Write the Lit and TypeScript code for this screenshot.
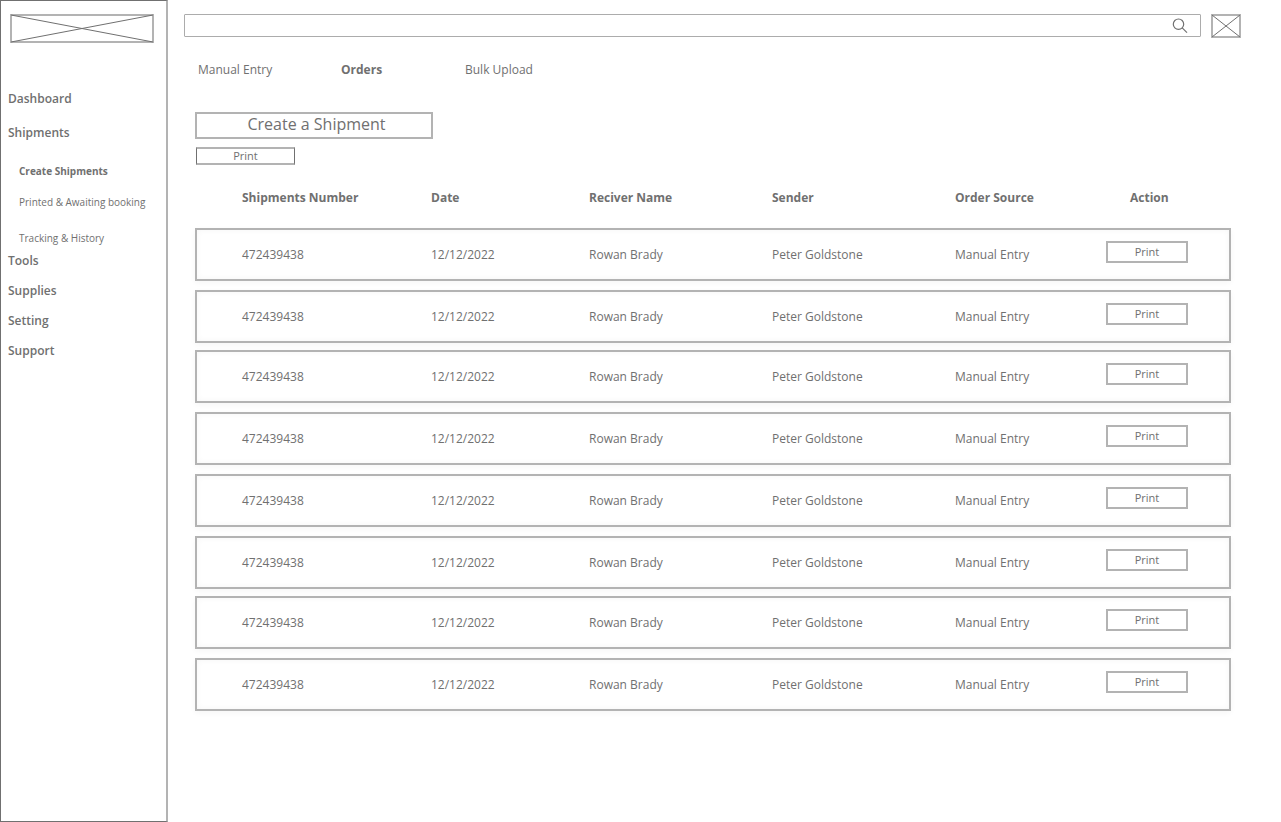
import { LitElement, html, css } from "lit";
import { customElement, property } from "lit/decorators.js";
import { classMap } from "lit/directives/class-map.js";

interface Shipment {
  number: string;
  date: string;
  receiver: string;
  sender: string;
  source: string;
}

const shipments: Shipment[] = Array.from({ length: 8 }, () => ({
  number: "472439438",
  date: "12/12/2022",
  receiver: "Rowan Brady",
  sender: "Peter Goldstone",
  source: "Manual Entry",
}));

@customElement("app-sidebar")
class AppSidebar extends LitElement {
  static styles = css`
    :host {
      box-sizing: border-box;
      display: block;
      padding: 13px 12px 24px 7px;
      border: 1px solid #707070;
      border-right: 2px solid #b3b3b3;
    }
    .logo {
      display: block;
      width: 144px;
      height: 29px;
      margin-left: 2px;
    }
    ul {
      list-style: none;
      margin: 0;
      padding: 0;
    }
    .menu {
      display: flex;
      flex-direction: column;
      gap: 12px;
      margin-top: 47px;
      font-size: 12px;
      font-weight: 600;
      line-height: 18px;
    }
    .section {
      margin-top: 4px;
    }
    .sub {
      display: flex;
      flex-direction: column;
      gap: 15px;
      padding: 21px 0 0 11px;
      margin-bottom: -6px;
      font-size: 10px;
      font-weight: 400;
      line-height: 16px;
      white-space: nowrap;
    }
    .last {
      margin-top: 5px;
    }
    .current {
      font-weight: 700;
    }
    a {
      color: #707070;
      text-decoration: none;
    }
  `;

  render() {
    return html`
      <svg class="logo" viewBox="0 0 144 29" role="img" aria-label="Logo">
        <rect x="1" y="1" width="142" height="27" fill="none" stroke="#b3b3b3" stroke-width="2" />
        <path d="M1 1L143 28M1 28L143 1" fill="none" stroke="#707070" />
      </svg>
      <nav aria-label="Main">
        <ul class="menu">
          <li><a href="#dashboard">Dashboard</a></li>
          <li class="section">
            <a href="#shipments">Shipments</a>
            <ul class="sub">
              <li><a class="current" href="#create">Create Shipments</a></li>
              <li><a href="#printed">Printed &amp; Awaiting booking</a></li>
              <li class="last"><a href="#tracking">Tracking &amp; History</a></li>
            </ul>
          </li>
          <li><a href="#tools">Tools</a></li>
          <li><a href="#supplies">Supplies</a></li>
          <li><a href="#setting">Setting</a></li>
          <li><a href="#support">Support</a></li>
        </ul>
      </nav>
    `;
  }
}

@customElement("shipment-table")
class ShipmentTable extends LitElement {
  @property({ attribute: false }) rows: Shipment[] = [];

  static styles = css`
    :host {
      display: block;
    }
    table,
    thead {
      display: block;
    }
    tbody {
      display: flex;
      flex-direction: column;
      gap: 9px;
      margin-top: 19px;
    }
    tr {
      display: grid;
      grid-template-columns: 189fr 158fr 183fr 183fr 151fr 82px;
      align-items: center;
      box-sizing: border-box;
      padding: 0 41px 0 45px;
      border: 2px solid transparent;
    }
    th,
    td {
      padding: 0;
      text-align: left;
      font-size: 12px;
      line-height: 18px;
    }
    .row {
      height: 53px;
      border-color: #b3b3b3;
      box-shadow: 0 2px 6px rgba(0, 0, 0, 0.04), inset 0 0 6px rgba(0, 0, 0, 0.04);
    }
    .row:nth-child(4n + 3) {
      margin-top: -2px;
    }
    .action-head {
      padding-left: 24px;
    }
    .action {
      align-self: start;
      display: flex;
      padding-top: 11px;
    }
    button {
      width: 82px;
      height: 22px;
      padding: 0;
      border: 2px solid #b3b3b3;
      background: #fff;
      color: #707070;
      font: 11px/16px "Open Sans", sans-serif;
    }
  `;

  render() {
    return html`
      <table>
        <thead>
          <tr>
            <th scope="col">Shipments Number</th>
            <th scope="col">Date</th>
            <th scope="col">Reciver Name</th>
            <th scope="col">Sender</th>
            <th scope="col">Order Source</th>
            <th scope="col" class="action-head">Action</th>
          </tr>
        </thead>
        <tbody>
          ${this.rows.map(
            (r) => html`<tr class="row">
              <td>${r.number}</td>
              <td>${r.date}</td>
              <td>${r.receiver}</td>
              <td>${r.sender}</td>
              <td>${r.source}</td>
              <td class="action"><button type="button">Print</button></td>
            </tr>`
          )}
        </tbody>
      </table>
    `;
  }
}

@customElement("app-root")
class AppRoot extends LitElement {
  static styles = css`
    :host {
      display: grid;
      grid-template-columns: 168px 1fr;
      min-height: 100vh;
      background: #fff;
      color: #707070;
      font-family: "Open Sans", sans-serif;
      font-size: 12px;
      line-height: 18px;
    }
    main {
      min-width: 0;
      padding: 14px 40px 24px 16px;
    }
    .top {
      display: flex;
      align-items: flex-start;
      gap: 10px;
    }
    .search {
      flex: 1;
      display: flex;
      align-items: center;
      box-sizing: border-box;
      height: 23px;
      padding: 0 12px 0 8px;
      border: 1px solid #acacac;
      border-radius: 1px;
    }
    .search input {
      flex: 1;
      min-width: 0;
      padding: 0;
      border: 0;
      outline: 0;
      background: none;
      color: inherit;
      font: inherit;
    }
    .search svg {
      display: block;
      width: 16px;
      height: 16px;
    }
    .mail {
      padding: 0;
      border: 0;
      background: none;
    }
    .mail svg {
      display: block;
      width: 30px;
      height: 24px;
    }
    .tabs {
      display: grid;
      grid-template-columns: 143px 124px auto;
      justify-content: start;
      margin-top: 23px;
      padding-left: 14px;
    }
    .tabs a {
      color: inherit;
      text-decoration: none;
    }
    .tabs .active {
      font-weight: 700;
    }
    .content {
      padding: 33px 10px 0 11px;
    }
    .buttons {
      display: flex;
      flex-direction: column;
      align-items: flex-start;
      gap: 8px;
      margin-bottom: 22px;
    }
    .buttons button {
      box-sizing: border-box;
      border: 2px solid #b3b3b3;
      background: #fff;
      color: inherit;
      font-family: inherit;
    }
    .create {
      width: 238px;
      height: 27px;
      padding: 0 0 3px 5px;
      font-size: 16px;
      line-height: 20px;
    }
    .buttons .print {
      width: 99px;
      height: 18px;
      margin-left: 1px;
      padding: 0;
      border-width: 2px 1px;
      border-color: #b3b3b3 #707070;
      font-size: 11px;
      line-height: 14px;
    }
  `;

  private tabs = ["Manual Entry", "Orders", "Bulk Upload"];

  render() {
    return html`
      <app-sidebar></app-sidebar>
      <main>
        <div class="top">
          <label class="search">
            <input type="search" aria-label="Search" />
            <svg viewBox="0 0 16 16" fill="none" stroke="#707070" stroke-width="1.2" aria-hidden="true">
              <circle cx="6.5" cy="6.2" r="5.2" />
              <path d="M10.2 9.9L15 14.6" />
            </svg>
          </label>
          <button class="mail" type="button" aria-label="Profile">
            <svg viewBox="0 0 30 24" fill="none">
              <rect x="1" y="1" width="28" height="22" stroke="#b3b3b3" stroke-width="2" />
              <path d="M1 1L29 23M1 23L29 1" stroke="#707070" />
            </svg>
          </button>
        </div>
        <nav class="tabs" aria-label="Shipment entry">
          ${this.tabs.map(
            (t) => html`<a href="#" class=${classMap({ active: t === "Orders" })}>${t}</a>`
          )}
        </nav>
        <section class="content">
          <div class="buttons">
            <button class="create" type="button">Create a Shipment</button>
            <button class="print" type="button">Print</button>
          </div>
          <shipment-table .rows=${shipments}></shipment-table>
        </section>
      </main>
    `;
  }
}
